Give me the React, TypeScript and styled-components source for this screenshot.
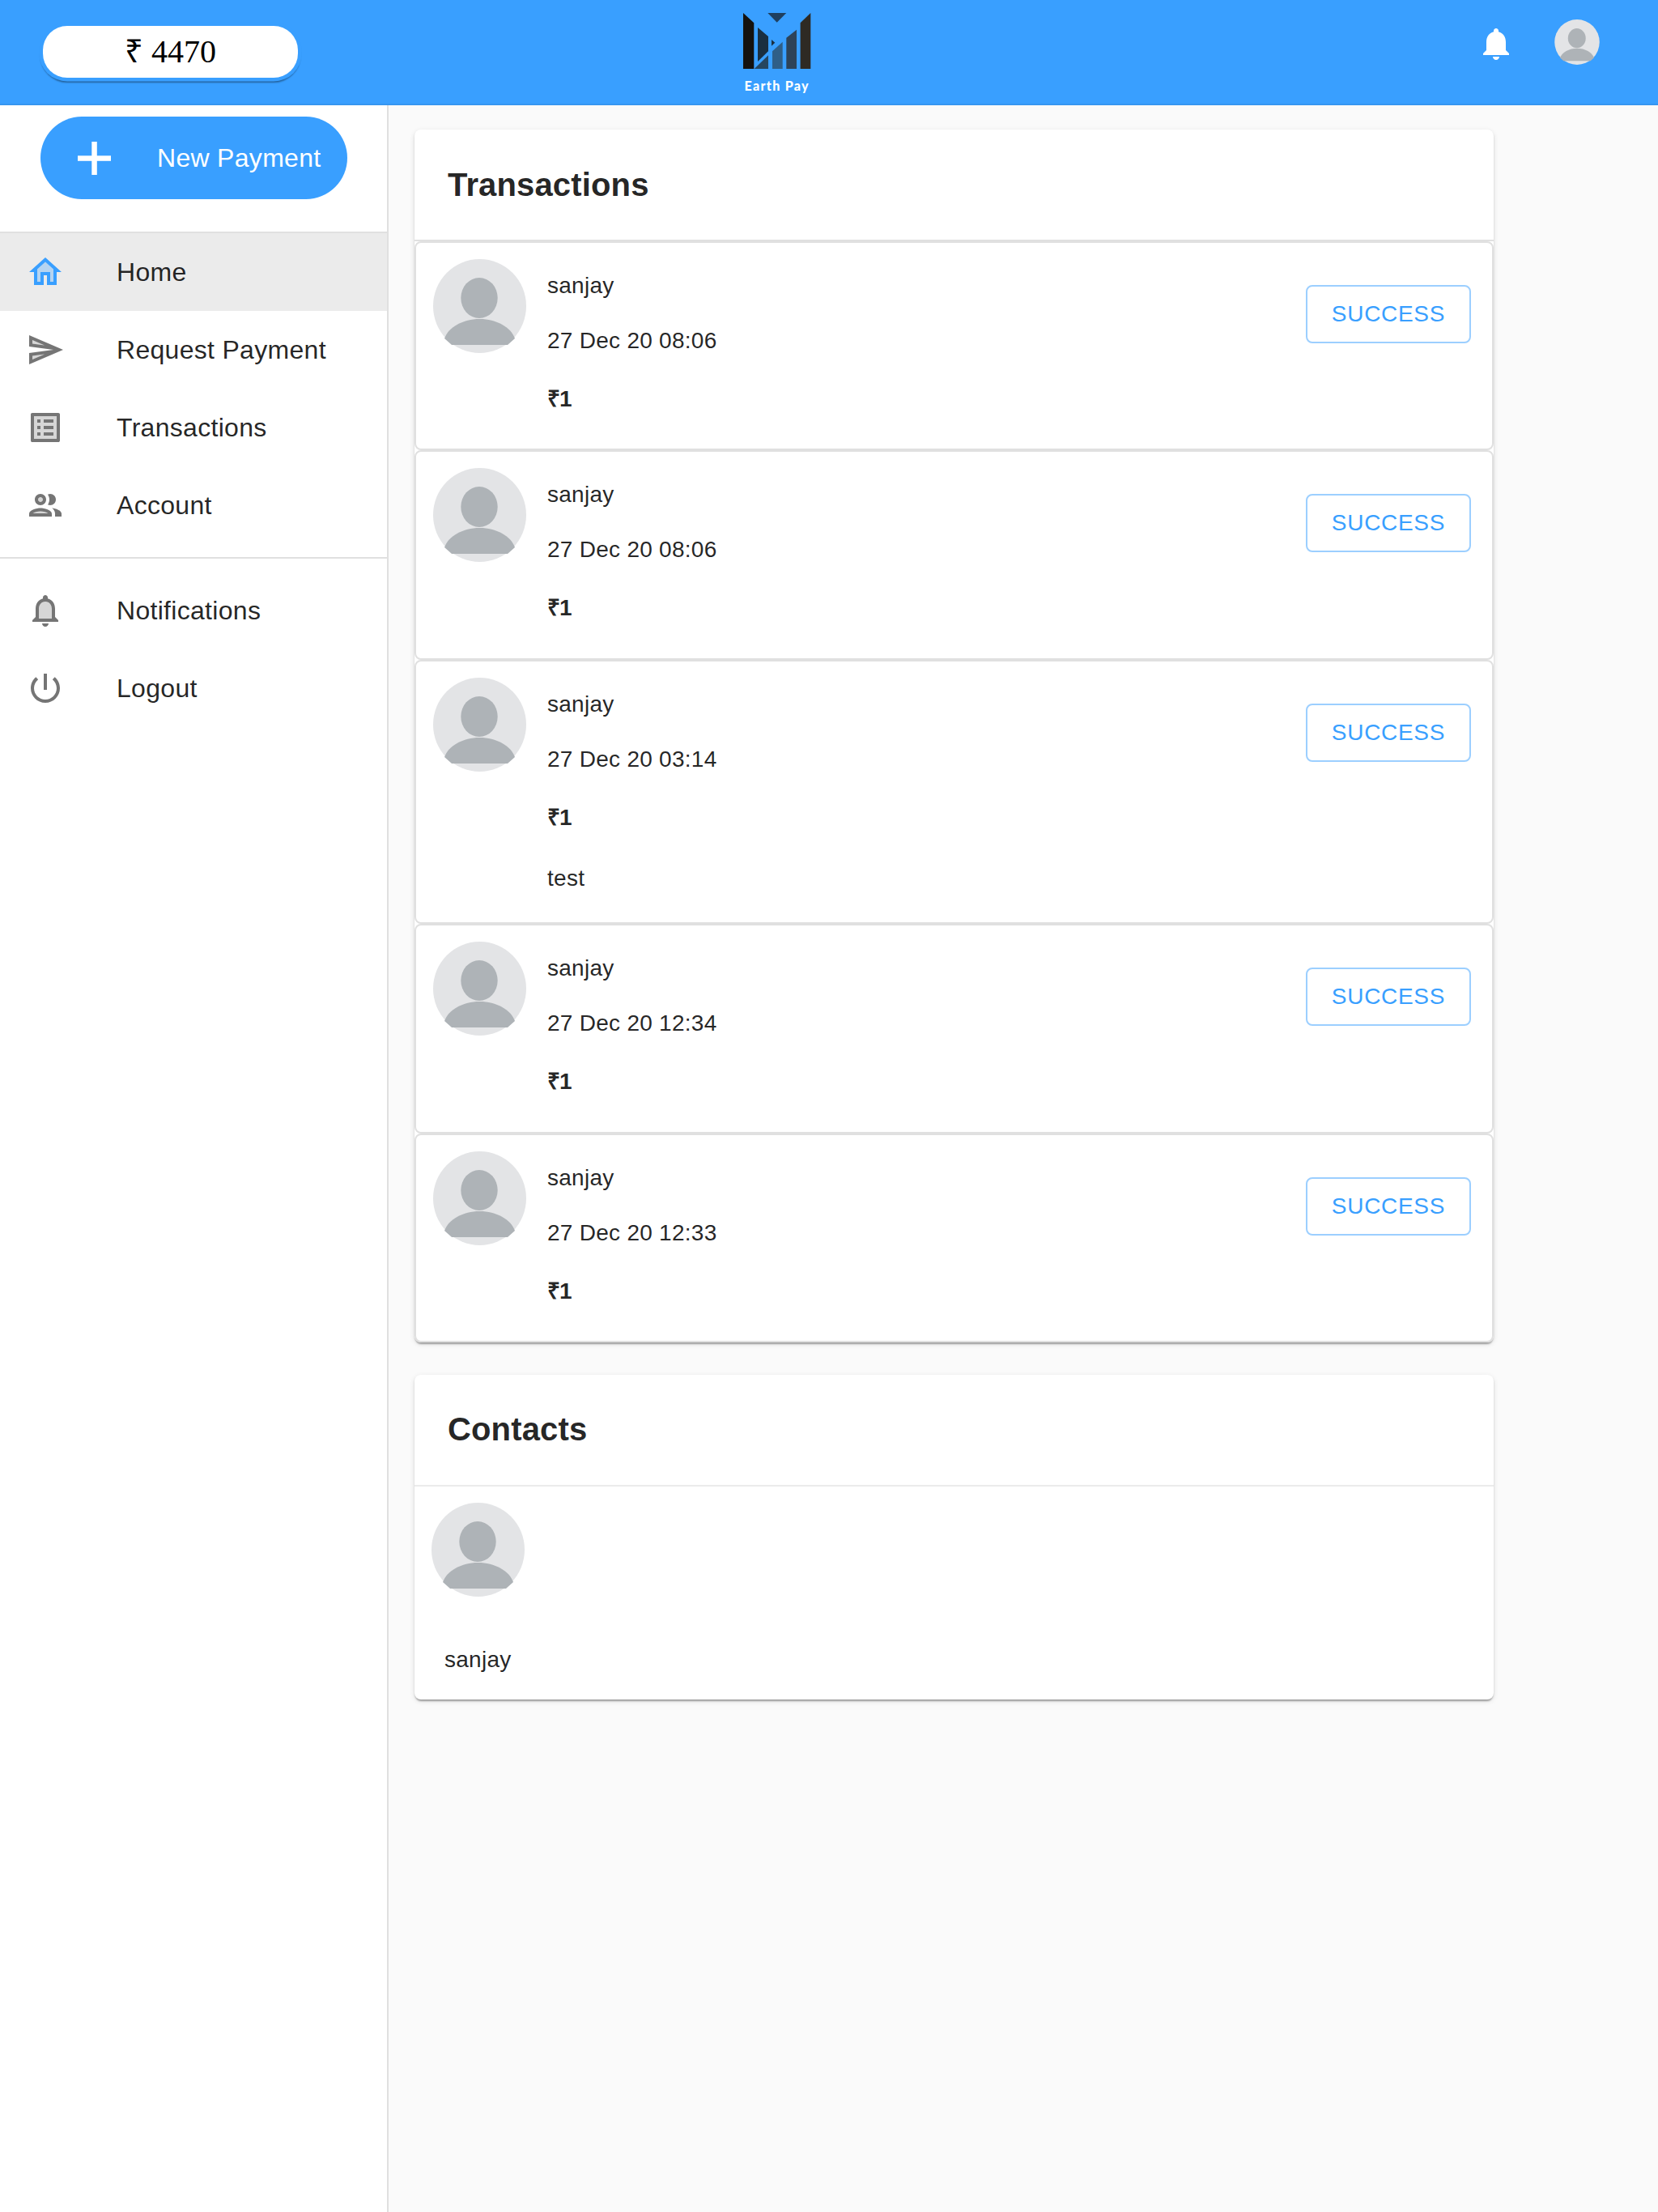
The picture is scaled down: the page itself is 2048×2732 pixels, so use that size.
import React from 'react';
import styled, { createGlobalStyle } from 'styled-components';

const BLUE = '#399fff';

const GlobalStyle = createGlobalStyle`
  html, body {
    margin: 0;
    padding: 0;
    background: #fafafa;
    font-family: "Liberation Sans", Arial, sans-serif;
    color: rgba(0, 0, 0, 0.87);
  }
  * { box-sizing: border-box; }
`;

const Page = styled.div`
  min-height: 2732px;
  display: flex;
  flex-direction: column;
`;

const Header = styled.header`
  height: 130px;
  flex-shrink: 0;
  background: ${BLUE};
  display: grid;
  grid-template-columns: 1fr 1fr 1fr;
  box-shadow: inset 0 -2px 0 rgba(0, 0, 0, 0.06);
`;

const HeaderLeft = styled.div`
  padding: 32px 0 0 53px;
`;

const Balance = styled.div`
  width: 315px;
  height: 64px;
  background: #fff;
  border-radius: 30px;
  box-shadow: 0 0 0 4.5px ${BLUE}, 0 3px 2px 3px rgba(0, 0, 0, 0.4);
  font-family: "Liberation Serif", "Times New Roman", serif;
  font-size: 40px;
  line-height: 64px;
  color: #000;
  text-align: center;
`;

const LogoWrap = styled.div`
  width: 100px;
  margin-left: 227px;
  padding-top: 16px;
  display: flex;
  flex-direction: column;
  align-items: center;
`;

const LogoText = styled.span`
  margin-top: 12px;
  font-family: Lato, "Open Sans", sans-serif;
  font-weight: 900;
  font-size: 16px;
  line-height: 18px;
  letter-spacing: 1.3px;
  color: #fff;
  white-space: nowrap;
`;

const HeaderRight = styled.div`
  display: flex;
  justify-content: flex-end;
  padding: 24px 72px 0 0;
  gap: 48px;
`;

const BellButton = styled.div`
  width: 48px;
  height: 48px;
  margin-top: 6px;
  color: #fff;
`;

const Body = styled.div`
  flex: 1;
  display: flex;
`;

const Sidebar = styled.aside`
  width: 480px;
  flex-shrink: 0;
  background: #fff;
  border-right: 2px solid #e0e0e0;
  padding-top: 14px;
`;

const NewPayment = styled.button`
  display: flex;
  align-items: center;
  width: 379px;
  height: 102px;
  margin-left: 50px;
  padding: 0 0 0 46px;
  border: 0;
  border-radius: 51px;
  background: ${BLUE};
  color: #fff;
  font-family: inherit;
  font-size: 32px;
  letter-spacing: 0.3px;
  gap: 57px;
`;

const NavDivider = styled.div<{ $top: number; $bottom: number }>`
  height: 2px;
  background: #e0e0e0;
  margin: ${({ $top, $bottom }) => `${$top}px 0 ${$bottom}px`};
`;

const NavRow = styled.div<{ $active?: boolean }>`
  height: 96px;
  display: flex;
  align-items: center;
  padding-left: 32px;
  gap: 64px;
  font-size: 32px;
  letter-spacing: 0.3px;
  background: ${({ $active }) => ($active ? '#ebebeb' : 'transparent')};
  color: rgba(0, 0, 0, 0.87);
`;

const NavIcon = styled.div<{ $active?: boolean }>`
  width: 48px;
  height: 48px;
  flex-shrink: 0;
  color: ${({ $active }) => ($active ? BLUE : 'rgba(0, 0, 0, 0.54)')};
`;

const Main = styled.main`
  width: 1364px;
  padding: 30px 0 0 32px;
  display: flex;
  flex-direction: column;
  gap: 40px;
`;

const Card = styled.section`
  width: 1333px;
  background: #fff;
  border-radius: 8px;
  box-shadow: 0 4px 2px -2px rgba(0, 0, 0, 0.2), 0 2px 2px rgba(0, 0, 0, 0.14), 0 2px 6px rgba(0, 0, 0, 0.12);
`;

const CardTitle = styled.h2<{ $light?: boolean }>`
  height: 138px;
  margin: 0;
  padding: 0 41px;
  display: flex;
  align-items: center;
  font-size: 40px;
  font-weight: 700;
  letter-spacing: 0.15px;
  color: rgba(0, 0, 0, 0.87);
  border-bottom: 2px solid ${({ $light }) => ($light ? '#ebebeb' : '#e0e0e0')};
`;

const TxRow = styled.div`
  display: flex;
  align-items: flex-start;
  padding: 20px 0 9.4px 21px;
  border: 2px solid #e0e0e0;
  border-radius: 8px;
`;

const AvatarCircle = styled.div`
  width: 115px;
  height: 116px;
  flex-shrink: 0;
`;

const HeaderAvatar = styled.div`
  width: 56px;
  height: 56px;
`;

const TxInfo = styled.div`
  flex: 1;
  padding: 13px 0 0 26px;
`;

const TxLine = styled.p`
  margin: 0 0 28px;
  font-size: 28px;
  letter-spacing: 0.27px;
  line-height: 40px;
`;

const TxAmount = styled.p`
  margin: 0 0 28px;
  font-size: 28px;
  font-weight: 700;
  letter-spacing: -1px;
  line-height: 48px;
`;

const TxNote = styled(TxLine)`
  margin: 31px 0 25px;
`;

const StatusButton = styled.button`
  width: 204px;
  height: 72px;
  margin: 32px 26px 0 0;
  padding: 0;
  background: transparent;
  border: 2px solid rgba(57, 159, 255, 0.5);
  border-radius: 8px;
  color: ${BLUE};
  font-family: inherit;
  font-size: 28px;
  letter-spacing: 0.7px;
`;

const ContactBody = styled.div`
  padding: 20px 0 29px 21px;
`;

const ContactName = styled.p`
  margin: 58px 0 0 16px;
  font-size: 28px;
  letter-spacing: 0.27px;
  line-height: 40px;
`;

const AvatarArt = () => (
  <svg width="100%" height="100%" viewBox="0 0 115 116">
    <ellipse cx="57.5" cy="58" rx="57.5" ry="58" fill="#e3e4e6" />
    <ellipse cx="57" cy="48" rx="22.7" ry="25" fill="#aeb3b7" />
    <path d="M14 98 C19 84 37 74 57.500 74 C78 74 96 84 101 98 L92 106 L23 106 Z" fill="#aeb3b7" />
  </svg>
);

const EarthLogo = () => (
  <svg width="84" height="69" viewBox="0 0 84 69">
    <polygon points="0,0 13.300,12.300 13.300,69 0,69" fill="#14120f" />
    <polygon points="83.300,0 70.600,12.300 70.600,69 83.300,69" fill="#2e2a24" />
    <polygon points="30.300,0 53.300,0 41.700,11.700" fill="#1f3f5f" />
    <polygon points="18,18 31,29 31,47.300 18,60" fill="#1a2f40" />
    <polygon points="35,33 39.300,36.700 35,40.700" fill="#1a2f40" />
    <polygon points="13.700,69 31,52.300 31,69" fill="#26465f" />
    <polygon points="36,69 36,47.300 48.700,35.700 48.700,69" fill="#2f5f88" />
    <polygon points="53.300,69 53.300,30.700 66,20.700 66,69" fill="#2e4358" />
  </svg>
);

const HomeIcon = () => (
  <svg viewBox="0 0 24 24" width="48" height="48" fill="currentColor">
    <path d="M12 5.690l5 4.500V18h-2v-6H9v6H7v-7.810z" opacity=".3" />
    <path d="M12 3L2 12h3v8h6v-6h2v6h6v-8h3L12 3zm5 15h-2v-6H9v6H7v-7.810l5-4.500 5 4.500V18z" />
  </svg>
);

const SendIcon = () => (
  <svg viewBox="0 0 24 24" width="48" height="48" fill="currentColor">
    <path d="M4 8.250l7.510 1-7.500-3.220zm.010 9.720l7.500-3.220-7.510 1z" opacity=".3" />
    <path d="M2.010 3L2 10l15 2-15 2 .010 7L23 12 2.010 3zM4 8.250V6.030l7.510 3.220-7.510-1zm.010 9.720v-2.220l7.510-1-7.510 3.220z" />
  </svg>
);

const ListIcon = () => (
  <svg viewBox="0 0 24 24" width="48" height="48" fill="currentColor">
    <path d="M5 5v14h14V5H5zm4 12H7v-2h2v2zm0-4H7v-2h2v2zm0-4H7V7h2v2zm8 8h-6v-2h6v2zm0-4h-6v-2h6v2zm0-4h-6V7h6v2z" opacity=".3" />
    <path d="M11 7h6v2h-6zm0 4h6v2h-6zm0 4h6v2h-6zM7 7h2v2H7zm0 4h2v2H7zm0 4h2v2H7zM20.100 3H3.900c-.500 0-.900.400-.900.900v16.200c0 .400.400.900.900.900h16.200c.400 0 .900-.500.900-.900V3.900c0-.500-.500-.900-.900-.900zM19 19H5V5h14v14z" />
  </svg>
);

const PeopleIcon = () => (
  <svg viewBox="0 0 24 24" width="48" height="48" fill="currentColor">
    <circle cx="9" cy="8.500" r="1.500" opacity=".3" />
    <path d="M4.340 17h9.320c-.840-.580-2.870-1.250-4.660-1.250s-3.820.670-4.660 1.250z" opacity=".3" />
    <path d="M9 12c1.930 0 3.500-1.570 3.500-3.500S10.930 5 9 5 5.500 6.570 5.500 8.500 7.070 12 9 12zm0-5c.830 0 1.500.670 1.500 1.500S9.830 10 9 10s-1.500-.670-1.500-1.500S8.170 7 9 7zm0 6.750c-2.340 0-7 1.170-7 3.500V19h14v-1.750c0-2.330-4.660-3.500-7-3.500zM4.340 17c.840-.580 2.870-1.250 4.660-1.250s3.820.670 4.660 1.250H4.340zm11.700-3.190c1.160.840 1.960 1.960 1.960 3.440V19h4v-1.750c0-2.020-3.500-3.170-5.960-3.440zM15 12c1.930 0 3.500-1.570 3.500-3.500S16.930 5 15 5c-.540 0-1.040.130-1.500.350.630.890 1 1.980 1 3.150s-.370 2.260-1 3.150c.460.220.960.350 1.500.350z" />
  </svg>
);

const BellTwoTone = () => (
  <svg viewBox="0 0 24 24" width="48" height="48" fill="currentColor">
    <path d="M12 6.500c-2.490 0-4 2.020-4 4.500v6h8v-6c0-2.480-1.510-4.500-4-4.500z" opacity=".3" />
    <path d="M12 22c1.100 0 2-.900 2-2h-4c0 1.100.900 2 2 2zm6-6v-5c0-3.070-1.630-5.640-4.500-6.320V4c0-.830-.670-1.500-1.500-1.500s-1.500.670-1.500 1.500v.680C7.640 5.360 6 7.920 6 11v5l-2 2v1h16v-1l-2-2zm-2 1H8v-6c0-2.480 1.510-4.500 4-4.500s4 2.020 4 4.500v6z" />
  </svg>
);

const PowerIcon = () => (
  <svg viewBox="0 0 24 24" width="48" height="48" fill="currentColor">
    <path d="M13 3h-2v10h2V3zm4.830 2.170l-1.420 1.420C17.990 7.860 19 9.810 19 12c0 3.870-3.130 7-7 7s-7-3.130-7-7c0-2.190 1.010-4.140 2.580-5.420L6.170 5.170C4.230 6.820 3 9.260 3 12c0 4.970 4.030 9 9 9s9-4.030 9-9c0-2.740-1.230-5.180-3.170-6.830z" />
  </svg>
);

const BellFilled = () => (
  <svg viewBox="0 0 24 24" width="48" height="48" fill="currentColor">
    <path d="M12 22c1.100 0 2-.900 2-2h-4c0 1.100.890 2 2 2zm6-6v-5c0-3.070-1.640-5.640-4.500-6.320V4c0-.830-.670-1.500-1.500-1.500s-1.500.670-1.500 1.500v.680C7.630 5.360 6 7.920 6 11v5l-2 2v1h16v-1l-2-2z" />
  </svg>
);

const PlusIcon = () => (
  <svg width="41" height="41" viewBox="0 0 41 41" fill="#fff">
    <rect x="17.300" y="0" width="6.500" height="41" />
    <rect x="0" y="17.300" width="41" height="6.500" />
  </svg>
);

const navTop = [
  { label: 'Home', icon: <HomeIcon />, active: true },
  { label: 'Request Payment', icon: <SendIcon /> },
  { label: 'Transactions', icon: <ListIcon /> },
  { label: 'Account', icon: <PeopleIcon /> },
];

const navBottom = [
  { label: 'Notifications', icon: <BellTwoTone /> },
  { label: 'Logout', icon: <PowerIcon /> },
];

const transactions = [
  { name: 'sanjay', date: '27 Dec 20 08:06', amount: '₹1' },
  { name: 'sanjay', date: '27 Dec 20 08:06', amount: '₹1' },
  { name: 'sanjay', date: '27 Dec 20 03:14', amount: '₹1', note: 'test' },
  { name: 'sanjay', date: '27 Dec 20 12:34', amount: '₹1' },
  { name: 'sanjay', date: '27 Dec 20 12:33', amount: '₹1' },
];

const App: React.FC = () => (
  <Page>
    <GlobalStyle />
    <Header>
      <HeaderLeft>
        <Balance>₹ 4470</Balance>
      </HeaderLeft>
      <LogoWrap>
        <EarthLogo />
        <LogoText>Earth Pay</LogoText>
      </LogoWrap>
      <HeaderRight>
        <BellButton>
          <BellFilled />
        </BellButton>
        <HeaderAvatar>
          <AvatarArt />
        </HeaderAvatar>
      </HeaderRight>
    </Header>
    <Body>
      <Sidebar>
        <NewPayment>
          <PlusIcon />
          New Payment
        </NewPayment>
        <NavDivider $top={40} $bottom={0} />
        {navTop.map((item) => (
          <NavRow key={item.label} $active={item.active}>
            <NavIcon $active={item.active}>{item.icon}</NavIcon>
            {item.label}
          </NavRow>
        ))}
        <NavDivider $top={16} $bottom={16} />
        {navBottom.map((item) => (
          <NavRow key={item.label}>
            <NavIcon>{item.icon}</NavIcon>
            {item.label}
          </NavRow>
        ))}
      </Sidebar>
      <Main>
        <Card>
          <CardTitle>Transactions</CardTitle>
          {transactions.map((tx, index) => (
            <TxRow key={index}>
              <AvatarCircle>
                <AvatarArt />
              </AvatarCircle>
              <TxInfo>
                <TxLine>{tx.name}</TxLine>
                <TxLine>{tx.date}</TxLine>
                <TxAmount>{tx.amount}</TxAmount>
                {tx.note && <TxNote>{tx.note}</TxNote>}
              </TxInfo>
              <StatusButton>SUCCESS</StatusButton>
            </TxRow>
          ))}
        </Card>
        <Card>
          <CardTitle $light>Contacts</CardTitle>
          <ContactBody>
            <AvatarCircle>
              <AvatarArt />
            </AvatarCircle>
            <ContactName>sanjay</ContactName>
          </ContactBody>
        </Card>
      </Main>
    </Body>
  </Page>
);

export default App;
